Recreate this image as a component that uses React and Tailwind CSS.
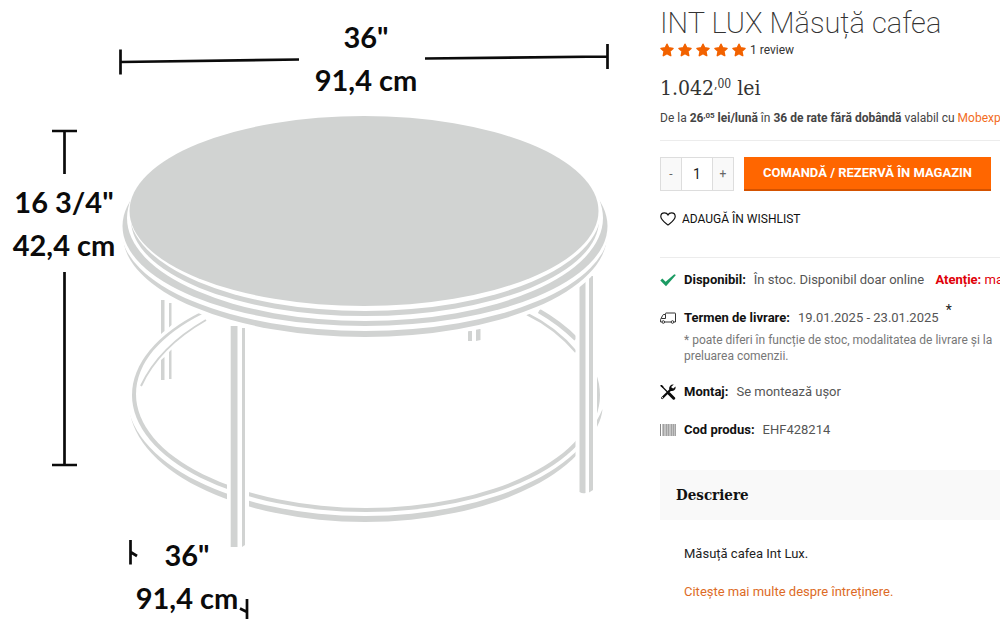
import React from "react";

const GREY = "#d1d3d2";

function TableDrawing() {
  return (
    <svg viewBox="0 0 620 619" className="block w-full" role="img" aria-label="INT LUX 36&quot; x 16 3/4&quot;">
      {/* lower ring */}
      <ellipse cx="365" cy="402" rx="236" ry="120" fill={GREY} />
      <ellipse cx="365" cy="396" rx="238" ry="120" fill="#fff" />
      <ellipse cx="366" cy="395" rx="234" ry="117" fill={GREY} />
      <ellipse cx="366" cy="394" rx="230" ry="114" fill="#fff" />
      <path d="M498 300H612V372H498Z" fill="#fff" />
      <path d="M206 320Q159 347 141 386" fill="none" stroke={GREY} strokeWidth="2" />
      <path d="M539 311Q560 323 576 339" fill="none" stroke={GREY} strokeWidth="4.5" />
      <path d="M527 314Q556 328 576 352" fill="none" stroke={GREY} strokeWidth="2.5" />

      {/* back legs */}
      <path d="M161 300h3.500V331l-3.500 3ZM169 303h2.500V325l-2.500 2.500ZM161 360l3.500-3V380h-3.500ZM169 352l2.500-2.500V379h-2.500Z" fill={GREY} />
      <path d="M468 331h4v10h-4ZM476 329h4.500v11l-4.500 1Z" fill={GREY} />

      {/* right leg */}
      <path d="M575.500 270h21.500v228h-21.500Z" fill="#fff" />
      <path d="M579.500 282h6V493q-3 1-6-1ZM589 276h4V490l-4 2.500Z" fill={GREY} />
      <path d="M602.500 409Q602 417 597 427V420Q600 415 602.500 409Z" fill={GREY} />

      {/* front leg */}
      <path d="M227 320h22v230h-22Z" fill="#fff" />
      <path d="M230.700 326h6.800V547h-6.800ZM242 328h3V545l-3 2Z" fill={GREY} />

      {/* table top with its edges */}
      <ellipse cx="365" cy="238" rx="244" ry="103" fill="#fff" />
      <ellipse cx="365" cy="235" rx="242" ry="102" fill={GREY} />
      <ellipse cx="365" cy="229" rx="244" ry="102" fill="#fff" />
      <ellipse cx="365" cy="226" rx="242.500" ry="100" fill={GREY} />
      <ellipse cx="365" cy="218" rx="238" ry="103" fill="#fff" />
      <ellipse cx="365" cy="220" rx="234" ry="96" fill={GREY} />
      <ellipse cx="365" cy="211" rx="236" ry="100" fill="#fff" />
      <ellipse cx="364" cy="211" rx="234.500" ry="95" fill={GREY} />

      {/* dimension lines */}
      <g fill="none" stroke="#0b0b0b" strokeWidth="2.700">
        <path d="M120.500 49.500V74.500M120.500 62L299 59.500M425 58.500L607.500 56.500M607.500 44V69" />
        <path d="M52 131H77M64.500 131V174M64.500 272V465M52 465H77" />
        <path d="M130.500 540V564.500M130.500 552L137 556M247 599V619M240 608.500L247 612" />
      </g>
      <g fill="#0b0b0b" fontFamily="Lato, sans-serif" fontWeight="700" fontSize="29" textAnchor="middle">
        <text x="366" y="48">36"</text>
        <text x="366" y="91">91,4 cm</text>
        <text x="64" y="213">16 3/4"</text>
        <text x="64" y="256">42,4 cm</text>
        <text x="187" y="566">36"</text>
        <text x="187" y="609">91,4 cm</text>
      </g>
    </svg>
  );
}

function Star() {
  return (
    <svg viewBox="0 0 14 14" className="h-3.5 w-3.5" fill="#f26200" stroke="#f26200" strokeWidth="1.500" strokeLinejoin="round" aria-hidden="true">
      <path d="M7 1.200l1.700 3.600 4.300.6-3.100 2.900.8 4.300L7 10.500 3.300 12.600l.8-4.300L1 5.400l4.300-.6z" />
    </svg>
  );
}

function Heart() {
  return (
    <svg viewBox="0 0 16 16" className="h-4 w-4" fill="none" stroke="#111" strokeWidth="1.200" aria-hidden="true">
      <path d="M8 14C5.500 12 .8 9.200.8 5.600.8 3.300 2.500 1.800 4.500 1.800c1.500 0 2.800.8 3.500 2.100.7-1.300 2-2.100 3.500-2.100 2 0 3.700 1.500 3.700 3.800C15.200 9.200 10.500 12 8 14z" />
    </svg>
  );
}

function CheckIcon() {
  return (
    <svg viewBox="0 0 16 16" className="h-4 w-4" aria-hidden="true">
      <path d="M.3 8.400L2.300 6.600 5.600 9.800 14.300 2.300 15.900 3 6 14.200z" fill="#1b9b63" />
    </svg>
  );
}

function VanIcon() {
  return (
    <svg viewBox="0 0 16 16" className="h-4 w-4" fill="none" stroke="#333" strokeWidth="1" strokeLinejoin="round" aria-hidden="true">
      <path d="M1.700 12H.6V9.500L2.700 5.300Q3 4.500 4 4.500H5.500V3.500Q5.500 3 6 3H15Q15.500 3 15.500 3.500V12H14M11 12H5M5.500 4.500V8.500H1.300" />
      <circle cx="3.300" cy="12" r="1.300" />
      <circle cx="12.500" cy="12" r="1.300" />
    </svg>
  );
}

function ToolsIcon() {
  return (
    <svg viewBox="0 0 16 16" className="h-4 w-4" fill="none" stroke="#0b0b0b" aria-hidden="true">
      <path d="M1 1.500L8 8.500" strokeWidth="1.300" />
      <path d="M.4.900L1.900.9 3.600 2.800 2.700 3.700.7 2.300z" fill="#0b0b0b" stroke="none" />
      <path d="M9 9.500L13.700 14.200" strokeWidth="3" strokeLinecap="round" />
      <path d="M2.200 14L11.500 4.700" strokeWidth="2.300" strokeLinecap="round" />
      <path d="M13.800.6A3.800 3.800 0 0 0 9.300 5.300L11 7A3.800 3.800 0 0 0 15.500 2.500L13.300 4.600 11.500 4.200 11.300 2.700z" fill="#0b0b0b" stroke="none" />
      <circle cx="2.400" cy="13.700" r=".6" fill="#fff" stroke="none" />
    </svg>
  );
}

function BarcodeIcon() {
  return (
    <svg viewBox="0 0 16 16" className="h-4 w-4" aria-hidden="true">
      <path d="M0 2h1v12H0z" fill="#888" />
      <path d="M2 2h14v12H2z" fill="#c4c4c4" />
      <path d="M3 2h1v12H3zM6 2h1v12H6zM8 2h1v12H8zM11 2h1v12h-1zM13 2h1v12h-1zM15 2h1v12h-1z" fill="#a2a2a2" />
    </svg>
  );
}

function InfoRow({ icon, label, children }) {
  return (
    <div className="flex h-5 items-center gap-2 whitespace-nowrap text-[13px] leading-5 text-[#555]">
      <span className="shrink-0">{icon}</span>
      <p>
        <strong className="mr-2 font-bold text-[#111]">{label}</strong>
        {children}
      </p>
    </div>
  );
}

export default function App() {
  return (
    <main className="flex items-start overflow-hidden bg-white font-[Roboto,sans-serif] text-[#333]">
      <figure className="w-[62%] shrink-0">
        <TableDrawing />
      </figure>

      <section className="min-w-0 flex-1 overflow-hidden pl-10 pt-1.5">
        <h1 className="whitespace-nowrap text-[29px] font-extralight leading-[34px]">INT LUX Măsuță cafea</h1>

        <div className="flex h-5 items-center gap-1 text-xs">
          <span className="flex gap-1" aria-label="5 / 5">
            <Star /><Star /><Star /><Star /><Star />
          </span>
          <span>1 review</span>
        </div>

        <p className="mt-3 whitespace-nowrap font-['Roboto_Slab','DejaVu_Serif_Condensed','DejaVu_Serif',serif] text-[21px] leading-8">
          1.042<sup className="top-[-7px] text-xs">,00</sup> lei
        </p>

        <p className="mt-0.5 whitespace-nowrap text-xs leading-6 text-[#444]">
          De la <strong>26<sup className="text-[8px]">,05</sup> lei/lună</strong> în <strong>36 de rate fără dobândă</strong> valabil cu{" "}
          <a href="#rate" className="text-[#f26c1d]">Mobexpert</a>
        </p>

        <div className="mt-2.5 flex gap-2.5 border-t border-[#ececec] pt-4">
          <div className="flex h-[34px] shrink-0 border border-[#ddd] text-xs text-[#666]">
            <button type="button" aria-label="Scade" className="w-5 bg-[#f9f9f9]">-</button>
            <input aria-label="Cantitate" defaultValue="1" className="w-8 border-x border-[#ddd] text-center text-sm text-[#222] outline-none" />
            <button type="button" aria-label="Crește" className="w-5 bg-[#f9f9f9]">+</button>
          </div>
          <button type="button" className="h-[34px] whitespace-nowrap border-b-2 border-[#d45200] bg-[#ff6600] px-[19px] text-[13px] font-bold text-white">
            COMANDĂ / REZERVĂ ÎN MAGAZIN
          </button>
        </div>

        <button type="button" className="mt-4.5 flex h-5 items-center gap-1.5 text-xs text-[#111]">
          <Heart />
          ADAUGĂ ÎN WISHLIST
        </button>

        <div className="mt-7 border-t border-[#ececec] pt-3">
          <InfoRow icon={<CheckIcon />} label="Disponibil:">
            În stoc. Disponibil doar online <strong className="ml-2 text-[#e00008]">Atenție:</strong>{" "}
            <span className="text-[#e00008]">mai</span>
          </InfoRow>
        </div>
        <div className="mt-4.5">
          <InfoRow icon={<VanIcon />} label="Termen de livrare:">
            19.01.2025 - 23.01.2025 <sup className="ml-1 text-sm leading-none text-[#222]">*</sup>
          </InfoRow>
          <p className="mt-1 whitespace-nowrap pl-6 text-xs leading-4 text-[#777]">
            * poate diferi în funcție de stoc, modalitatea de livrare și la<br />
            preluarea comenzii.
          </p>
        </div>
        <div className="mt-4.5">
          <InfoRow icon={<ToolsIcon />} label="Montaj:">Se montează ușor</InfoRow>
        </div>
        <div className="mt-4.5">
          <InfoRow icon={<BarcodeIcon />} label="Cod produs:">EHF428214</InfoRow>
        </div>

        <h2 className="mt-7.5 bg-[#f9f9f9] py-3 pl-4 font-['Roboto_Slab','DejaVu_Serif_Condensed','DejaVu_Serif',serif] text-[15px] font-semibold leading-[26px] text-[#111]">
          Descriere
        </h2>
        <p className="mt-6 pl-6 text-[13px] leading-5 text-[#222]">Măsuță cafea Int Lux.</p>
        <p className="mt-[18px] pl-6 text-[13px] leading-5">
          <a href="#intretinere" className="text-[#dd6b26]">Citește mai multe despre întreținere.</a>
        </p>
      </section>
    </main>
  );
}
